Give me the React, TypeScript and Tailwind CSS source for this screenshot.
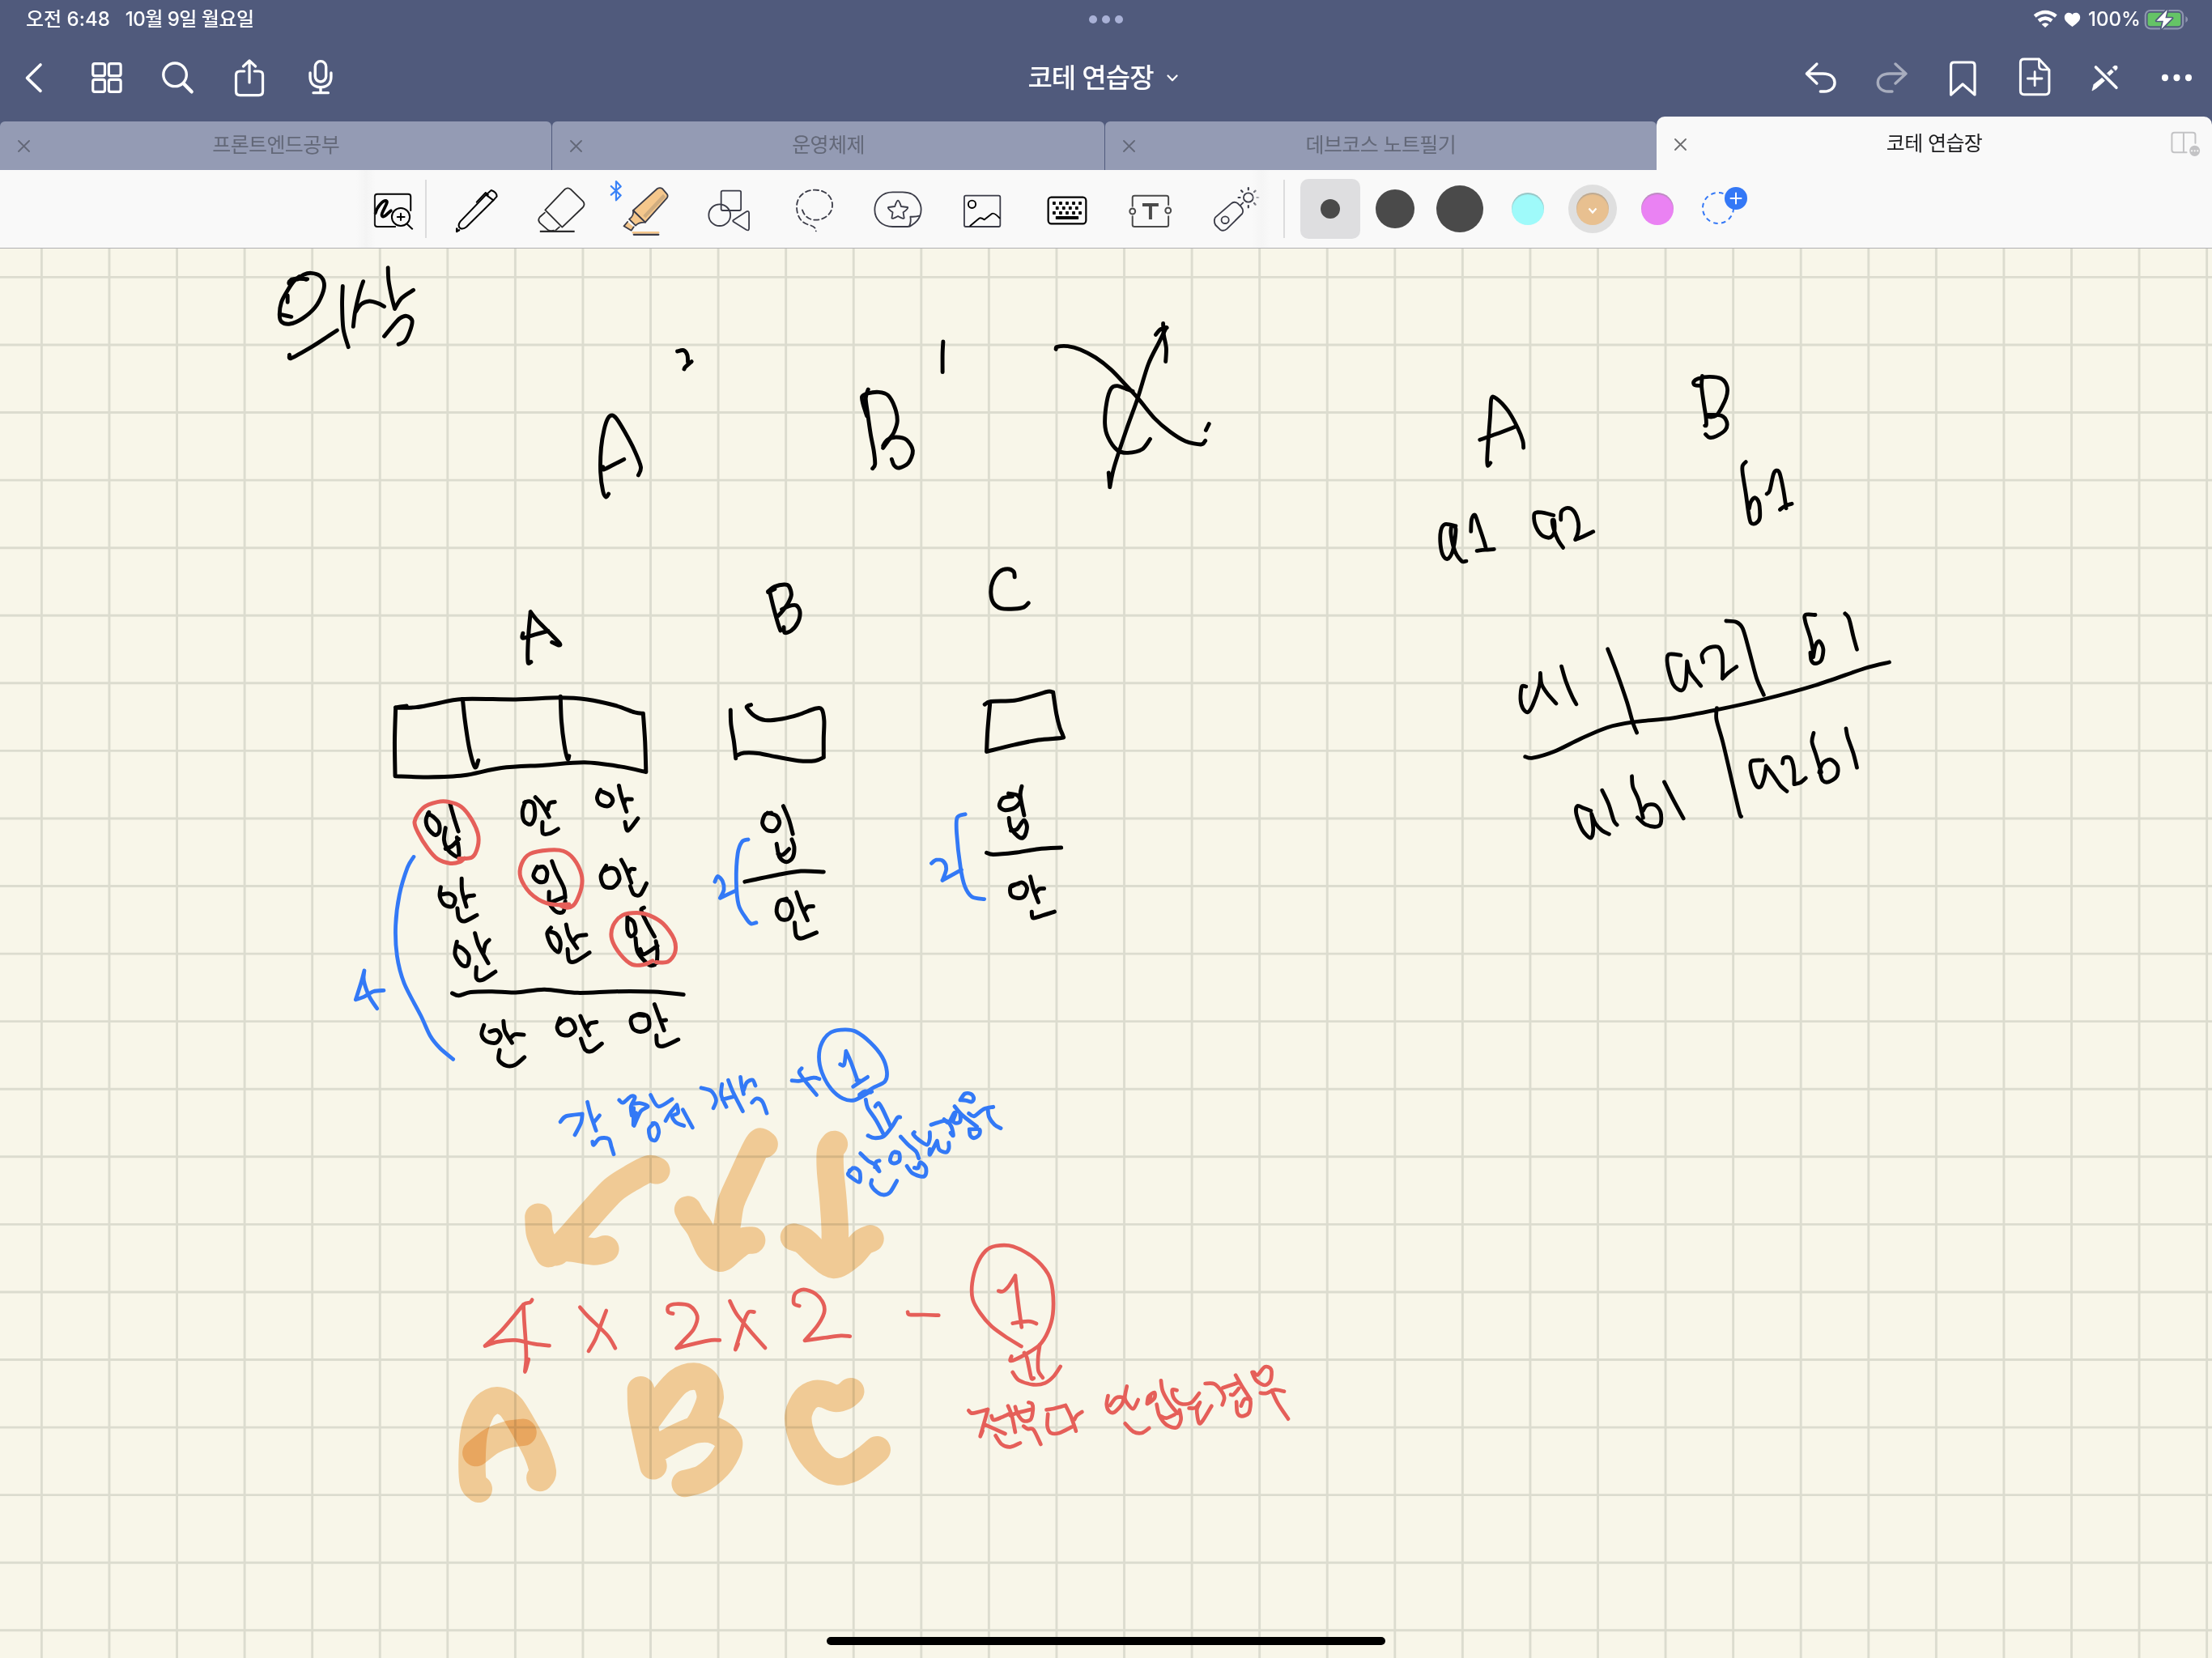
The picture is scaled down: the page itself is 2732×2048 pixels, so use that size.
import React from "react";

type Box = [number, number, number, number];
type Space = { x: number; y: number; kx: number; ky: number };

/* Coordinate spaces the drawings were sampled in. */
const LEFT: Space = { x: 0, y: 0, kx: 700 / 1568, ky: 1 / 3 };
const RIGHT: Space = { x: 2100, y: 0, kx: 632 / 1568, ky: 1 / 3 };
const TOOLS_A: Space = { x: 420, y: 200, kx: 600 / 1568, ky: 1 / 3 };
const TOOLS_B: Space = { x: 1000, y: 200, kx: 600 / 1568, ky: 1 / 3 };
const TITLE: Space = { x: 320, y: 310, kx: 1200 / 1568, ky: 1 / 3 };
const CASES: Space = { x: 420, y: 680, kx: 920 / 1568, ky: 660 / 1568 };
const TABLE: Space = { x: 1740, y: 440, kx: 640 / 1568, ky: 620 / 1568 };
const FORMULA: Space = { x: 520, y: 1260, kx: 760 / 1568, ky: 620 / 1568 };
const REMARK: Space = { x: 1060, y: 1290, kx: 1 / 3, ky: 1 / 3 };
const NOTE: Space = { x: 1080, y: 1480, kx: 560 / 1568, ky: 1 / 3 };

const toTransform = (s: Space) => `translate(${s.x} ${s.y}) scale(${s.kx} ${s.ky})`;

function Glyph({ box, space, children, className = "" }: { box: Box; space: Space; children: React.ReactNode; className?: string }) {
  return (
    <svg
      width={box[2]}
      height={box[3]}
      viewBox={box.join(" ")}
      className={"shrink-0 [&_*]:[vector-effect:non-scaling-stroke] " + className}
      fill="none"
      stroke="currentColor"
      strokeLinecap="round"
      strokeLinejoin="round"
    >
      <g transform={toTransform(space)}>{children}</g>
    </svg>
  );
}

/* Smooths sampled pen points into a cubic path; "|" separates strokes. */
function smooth(data: string): string {
  return data
    .split("|")
    .map((stroke) => {
      const p = stroke.trim().split(/\s+/).map((v) => v.split(",").map(Number));
      let d = `M${p[0][0]} ${p[0][1]}`;
      for (let i = 0; i < p.length - 1; i++) {
        const a = p[i - 1] ?? p[i];
        const b = p[i];
        const c = p[i + 1];
        const e = p[i + 2] ?? c;
        const f = 6.5;
        d += `C${b[0] + (c[0] - a[0]) / f} ${b[1] + (c[1] - a[1]) / f} ${c[0] - (e[0] - b[0]) / f} ${c[1] - (e[1] - b[1]) / f} ${c[0]} ${c[1]}`;
      }
      return d;
    })
    .join("");
}

function Ink({ space, color, width, strokes, className }: { space: Space; color: string; width: number; strokes: string[]; className?: string }) {
  return (
    <g transform={toTransform(space)} stroke={color} strokeWidth={width} className={className}>
      {strokes.map((s, i) => (
        <path key={i} d={smooth(s)} />
      ))}
    </g>
  );
}

const BLACK = "#030303";
const RED = "#e55f59";
const BLUE = "#3379f6";

const titleInk = [
  "50,125 52,106 62,103 78,104",
  "62,105 72,88 84,82 98,92 105,120 102,160 90,210 70,250 50,270 36,262 33,235 36,190 45,150 55,115 65,95",
  "50,125 48,118 52,108 66,100 76,106 | 46,165 46,190 | 36,236 52,244",
  "135,130 134,200 136,290 144,356",
  "126,294 110,318 85,355 52,397 49,385",
  "168,113 162,155 155,225 152,280 | 156,225 165,197 178,186 192,194 202,206",
  "208,62 209,110 214,170 219,214 | 219,214 230,175 249,145",
  "202,316 215,280 227,250 238,241 247,258 243,300 235,335 225,346",
  "675,372 685,368 691,385 692,412 | 698,410 688,430 686,438",
  "1104,336 1103,380 1103,449",
  "564,900 560,912 555,890 551,820 552,730 557,660 563,620 570,609 577,622 590,670 605,735 616,800 612,831",
  "555,800 556,810 572,792 589,772",
  "983,513 979,545 982,600 987,680 992,740 994,790 990,806",
  "981,612 975,570 973,540 982,528 1000,523 1015,535 1026,580 1030,630 1025,670 1018,695 1007,730",
  "1007,722 1014,700 1028,690 1045,700 1055,740 1048,785 1033,804 1025,795 1021,772",
  "1371,822 1373,875 | 1373,875 1380,800 1400,660 1418,545 1435,420 1452,340 1464,284",
  "1447,310 1455,290 1465,284 | 1459,268 1460,310 1464,360 1463,410",
  "1286,364 1288,355 1305,353 1325,365 1350,395 1375,440 1400,500 1420,550 1445,620 1470,670 1495,705 1520,717 1527,703",
  "1533,641 1528,664",
  "1410,520 1400,512 1385,500 1375,510 1368,560 1365,640 1370,690 1385,738 1402,748 1425,735 1438,697",
];

const caseBlack = [
  "402,327 396,330 395,300 397,240 401,180 | 401,180 415,205 440,240 462,272 460,278 446,269 | 385,243 385,257 410,247 438,236",
  "915,113 901,122 | 901,120 915,106 935,100 945,105 950,130 943,155 930,180 922,192 | 930,173 945,163 960,161 968,180 964,210 950,235 936,241 934,225 | 904,118 912,165 922,215 927,235",
  "1420,78 1418,62 1405,54 1388,62 1374,90 1370,125 1376,155 1392,170 1420,171 1440,166 1449,154",
  "117,463 115,560 116,662 | 116,662 185,665 260,660 340,638 430,630 515,622 590,634 644,650 | 644,650 642,560 638,478 | 638,478 620,475 580,455 520,437 460,432 370,437 258,436 200,450 160,460 117,461 140,456",
  "258,436 263,500 272,580 284,636 291,616 | 464,428 466,500 472,570 479,612 482,603",
  "822,468 823,510 829,560 833,610 | 833,603 850,594 880,595 920,606 965,617 1000,617 1018,607 | 1018,607 1018,550 1019,500 1014,466 1000,464 965,482 930,494 895,498 872,485 856,460 865,453",
  "1357,452 1370,443 1420,440 1460,426 1490,414 1501,416 | 1501,416 1508,480 1515,520 1522,545 1518,550 1470,556 1420,570 1361,590 | 1361,590 1363,530 1368,450",
  "187,768 181,790 185,815 200,835 209,825 208,800 195,780 185,772 | 232,745 240,785 249,824 | 222,814 219,850 228,880 248,900 250,880 246,842 | 222,875 235,868 250,847",
  "390,738 384,765 388,795 402,803 410,780 408,745 398,736 388,740 | 411,724 425,745 440,782 | 437,760 441,742 452,738 | 426,797 427,830 442,830 459,817",
  "548,702 541,725 548,745 565,750 574,735 568,718 552,708 | 587,690 592,720 603,766 | 598,742 602,730 614,730 | 600,797 606,822 627,786",
  "212,988 210,1015 220,1040 237,1044 242,1020 230,1007 212,1010 | 256,963 257,1000 266,1045 | 263,1025 268,1015 282,1012 | 247,1050 250,1078 262,1088 288,1070",
  "415,928 407,955 418,972 432,970 436,945 428,928 414,932 | 446,912 455,945 471,990 474,1018 | 440,1002 441,1035 455,1060 470,1060 474,1030 | 445,1032 470,1018",
  "560,925 549,955 556,985 575,988 588,965 582,938 570,932 555,940 | 592,908 602,935 613,975 | 608,945 612,935 620,935 | 611,985 618,1008 632,1010 645,977",
  "246,1148 242,1185 255,1215 268,1218 271,1190 258,1168 245,1160 | 284,1123 292,1160 312,1211 | 302,1180 306,1155 314,1143 | 287,1223 287,1255 300,1260 327,1236",
  "444,1107 436,1125 445,1160 460,1178 464,1150 455,1125 440,1118 | 476,1098 482,1130 499,1167 | 490,1148 500,1132 518,1128 | 479,1170 482,1203 495,1206 525,1180",
  "605,1075 605,1115 612,1132 622,1120 618,1090 606,1078 | 640,1048 634,1056 645,1090 662,1133 | 622,1138 627,1180 650,1216 662,1216 | 665,1147 668,1175 667,1210 | 632,1170 640,1185 668,1160",
  "236,1299 250,1306 275,1296 320,1294 370,1297 430,1288 500,1298 580,1294 660,1295 723,1303",
  "303,1393 298,1420 308,1440 328,1445 338,1425 330,1408 315,1412 | 344,1381 347,1410 362,1445 | 358,1432 368,1420 387,1421 | 336,1466 334,1495 350,1512 368,1510 388,1487",
  "463,1373 457,1400 465,1420 482,1422 495,1405 488,1380 475,1376 460,1390 | 506,1366 515,1395 525,1422 | 520,1400 526,1388 540,1384 | 507,1433 516,1465 530,1469 551,1447",
  "640,1365 622,1364 612,1378 618,1405 635,1412 650,1400 648,1368 630,1360 614,1370 | 662,1332 672,1370 682,1408 | 675,1380 686,1378 | 666,1423 668,1450 682,1454 712,1435",
  "908,770 895,775 889,800 898,820 915,822 925,800 918,778 900,770 | 933,750 945,790 953,832 | 919,861 925,900 940,914 953,900 956,870 951,848 | 922,890 932,893 945,876",
  "852,972 875,965 920,952 970,941 1018,943",
  "940,1022 924,1030 919,1060 928,1082 945,1080 952,1055 945,1030 932,1025 | 961,1003 970,1040 984,1085 | 976,1060 984,1046 996,1044 | 957,1092 960,1130 972,1138 1003,1121",
  "1415,722 1395,727 1388,750 1400,762 1420,755 1432,735 1425,718 1407,713 | 1435,692 1432,720 1440,777 | 1408,785 1412,815 1430,842 1441,838 1446,810 1439,792 1425,818 1412,822",
  "1361,887 1375,892 1420,887 1470,876 1518,872",
  "1428,978 1412,985 1412,1010 1425,1020 1440,1015 1446,990 1435,974 1415,985 | 1453,957 1460,995 1470,1032 | 1464,1005 1472,993 1482,992 | 1456,1060 1458,1078 1470,1075 1504,1060",
];

const caseRed = [
  "262,903 252,914 232,918 205,905 185,875 165,830 157,795 175,755 205,738 230,738 255,752 275,785 290,830 290,868 278,900 250,904",
  "482,1042 435,1035 400,1005 380,960 382,920 400,890 440,879 470,882 492,905 508,950 508,990 495,1035 480,1048 462,1040 482,1038",
  "658,1204 640,1215 615,1215 590,1185 572,1140 575,1100 595,1070 625,1063 650,1070 680,1095 703,1140 705,1180 690,1207 665,1208",
];

const caseBlue = [
  "78,1344 62,1310 50,1262 51,1233 | 51,1233 45,1265 33,1318 | 33,1318 50,1310 70,1294 92,1291",
  "155,899 142,930 125,1010 117,1100 120,1190 135,1270 170,1365 190,1425 210,1460 238,1493",
  "789,972 795,956 805,970 808,995 800,1020 | 800,1020 833,998 | 859,848 846,855 837,890 834,970 839,1040 855,1080 865,1095 876,1092",
  "1245,918 1255,908 1270,912 1276,935 1268,968 | 1268,968 1308,937 | 1316,774 1299,784 1298,830 1306,930 1315,985 1330,1016 1356,1023",
];

const tableInk = [
  "247,333 239,342 237,325 240,270 246,190 250,132 265,132 300,170 330,225 345,265 347,286 | 215,261 265,243 325,219",
  "888,62 886,95 893,150 899,190 900,215 896,217 | 884,92 865,90 862,80 875,70 910,64 945,70 963,95 960,130 935,180 915,190 903,187 | 905,183 945,185 962,205 958,230 930,250 910,254 898,244",
  "1020,330 1010,342 1010,365 1020,430 1028,490 1035,520 1050,522 1062,505 1060,460 1048,442 1035,455 1030,475 | 1083,430 1092,420 1103,370 1112,357 1122,365 1133,415 1142,475 | 1123,479 1140,467 1159,461",
  "142,530 110,525 97,545 96,590 105,625 120,632 135,600 142,540 130,530 128,560 140,610 160,640 174,640 | 188,547 190,510 200,496 212,530 228,580 234,603 | 206,608 230,605 258,603",
  "438,497 400,488 380,492 382,525 400,557 425,567 440,550 440,515 434,515 440,545 452,575 467,598 | 460,511 462,485 480,474 500,485 513,520 512,550 504,573 | 504,573 530,562 558,548",
  "355,1032 342,1032 338,1070 345,1100 360,1112 375,1090 395,1030 398,990 | 398,990 402,1025 420,1055 446,1085 | 462,969 475,1015 495,1065 507,1087 | 602,915 630,990 660,1080 678,1145 690,1176",
  "823,934 786,932 783,965 800,1025 825,1044 838,1020 842,953 | 842,953 850,985 868,1010 884,1030 | 891,956 887,932 905,912 935,908 948,930 950,970 949,1007 | 949,1007 968,988 992,970 | 960,827 990,830 1010,850 1030,920 1052,1005 1074,1058",
  "1230,808 1200,808 1200,830 1215,880 1225,930 | 1215,926 1218,950 1230,960 1248,950 1254,915 1242,890 1230,905 1224,940 | 1320,804 1332,820 1345,875 1356,916",
  "352,1251 375,1255 440,1235 520,1195 600,1160 680,1143 800,1130 930,1105 1070,1073 1230,1028 1380,975 1454,956 | 932,1099 931,1135 950,1205 975,1315 1000,1425 1006,1438",
  "551,1420 530,1412 510,1405 507,1430 525,1480 550,1505 558,1480 553,1430 | 553,1430 565,1460 585,1482 606,1493 | 585,1356 605,1400 620,1450 630,1464 | 675,1312 678,1345 695,1385 709,1442 | 709,1420 720,1403 745,1402 762,1425 762,1460 745,1470 715,1462 692,1441 | 773,1330 800,1385 831,1444",
  "1071,1262 1036,1266 1036,1300 1050,1340 1065,1345 1076,1315 1081,1280 | 1081,1280 1100,1305 1125,1342 1144,1359 | 1131,1272 1135,1255 1155,1256 1165,1290 1166,1337 | 1166,1337 1185,1332 1201,1318 | 1225,1177 1220,1205 1232,1245 1248,1300 | 1242,1300 1252,1272 1275,1260 1297,1280 1295,1312 1270,1330 1252,1325 1244,1300 | 1323,1163 1328,1190 1345,1240 1356,1285",
];

const formulaBlue = [
  "1122,237 1150,213 1182,192 1187,160 1175,115 1145,70 1108,36 1080,30 1045,38 1022,70 1014,115 1022,165 1045,215 1075,245 1105,250 1146,222 | 1122,234 1144,222",
  "1068,138 1078,140 1083,97 | 1083,97 1095,130 1112,188 | 1101,208 1138,178 | 1110,188 1120,190",
  "945,189 965,190 1000,180 1015,184 | 970,151 964,165 985,200 1008,234",
  "355,318 370,300 411,293 | 411,293 408,320 392,359 | 424,256 432,295 446,345 | 440,320 455,298 | 437,380 440,390 455,370 478,371 485,395 491,419",
  "505,250 515,258 535,238 545,242 535,270 537,298 | 537,262 560,260 578,270 560,285 543,330 | 542,275 541,328 | 548,290 545,325 | 595,322 581,340 585,370 598,375 606,350 600,325 590,322",
  "585,234 605,270 640,247 | 623,315 635,290 652,265 | 652,265 655,290 640,300 650,320 670,330 | 667,280 692,336",
  "714,212 740,222 752,250 745,275 | 767,200 765,235 778,271 | 783,188 795,225 820,285 | 768,248 800,238",
  "814,178 817,205 822,231 | 822,220 830,195 845,187 852,205 | 843,258 855,245 870,255 881,291",
  "1100,462 1088,480 1095,490 1117,506 1118,475 1105,462 1092,470",
];

const remarkBlue = [
  "5,192 25,182 50,175 | 5,186 25,174 46,178",
  "28,205 35,235 65,280 92,330 | 63,230 75,218 90,240 120,305 | 36,338 60,347 95,340 125,305 145,272 155,270",
  "8,404 35,430 65,448 78,470 70,462 | 62,455 66,436 78,431 | 50,503 48,522 70,548 95,558 118,548 143,506",
  "150,402 128,402 118,430 132,441 152,432 152,405 135,398 | 157,342 185,372 215,398 224,422",
  "180,451 200,477 235,490 250,482 250,455 230,437 222,458 208,457",
  "208,326 204,334 225,355 255,372 265,350 265,326 | 265,388 266,408 292,358 | 292,358 300,390 325,400 336,385 335,364",
  "270,298 295,290 325,283 345,305 352,338 342,328 | 318,278 335,290 355,255 360,258 352,280 | 357,230 385,262 440,305 | 378,258 378,285 362,292 350,285 | 412,315 415,338 430,347 448,335 448,315 412,315",
  "378,206 395,183 418,184 428,200 420,213 400,208 378,206 | 410,256 430,266 465,240 500,232 | 480,240 485,270 505,298 528,311",
];

const formulaRed = [
  "283,874 278,882 262,888 240,920 205,970 163,1018 | 163,1018 195,1005 240,1000 290,1012 327,1017 | 261,888 263,940 267,1010 268,1060 265,1099 274,1060",
  "405,897 425,925 475,985 495,1025 | 472,908 462,940 445,995 427,1034",
  "642,917 630,912 630,895 650,887 685,893 704,925 695,965 670,1000 651,1025 | 651,1025 700,1010 740,1000 761,1000",
  "787,878 805,920 845,980 877,1024 | 849,912 835,912 825,935 812,985 801,1029 808,1012",
  "964,893 950,885 953,855 975,842 1005,855 1025,885 1027,915 1010,955 978,1001 | 978,1001 1030,992 1070,986 1093,988",
];

const highlighter = [
  "600,470 580,465 540,490 490,530 440,595 390,665 345,725 | 299,615 302,665 315,705 325,730 | 325,730 370,712 440,723 470,715",
  "875,388 862,382 845,420 815,500 790,570 780,640 765,740 | 680,592 690,615 710,650 735,715 762,744 790,720 820,692 843,688",
  "1053,388 1043,410 1043,470 1050,560 1055,660 1053,760 | 950,678 975,690 1010,730 1052,765 1095,735 1125,695 1145,683",
  "147,1465 133,1445 130,1380 135,1290 155,1220 180,1192 205,1190 230,1210 265,1280 295,1350 310,1410 303,1430",
  "140,1352 180,1315 220,1295 260,1288",
  "560,1155 562,1220 575,1300 592,1393 | 582,1240 615,1185 655,1130 695,1113 725,1130 737,1180 720,1240 700,1280 | 592,1345 650,1305 700,1280 750,1283 785,1320 765,1380 720,1430 673,1448",
  "1095,1160 1080,1175 1055,1182 1030,1170 1005,1167 980,1185 962,1230 965,1280 985,1340 1020,1390 1060,1411 1100,1400 1140,1365 1162,1342",
];

const noteInk = [
  "115,422 122,432 170,432 222,434",
  "508,549 460,518 405,475 365,425 340,375 338,315 355,245 385,195 420,177 480,179 550,220 600,280 616,340 617,430 600,495 570,545 520,580 472,603 474,586",
  "429,344 445,345 465,325 487,287 | 487,287 492,340 500,410 509,478 | 478,464 510,458 540,457 560,465",
  "518,573 527,590 535,630 543,668 551,667 | 572,543 566,590 567,640 582,665 | 478,645 500,675 550,691 590,685 620,660 643,624",
  "326,787 340,797 392,783 | 392,783 380,830 366,882 374,862 | 380,838 452,873 | 405,807 412,822 440,812 470,797 | 462,770 475,805 487,867 | 419,880 440,912 470,922 504,907",
  "487,773 495,800 515,825 540,820 548,785 545,762 533,757 | 470,805 490,797 545,782 | 516,845 530,855 550,858 575,912",
  "595,784 620,780 661,768 | 600,800 598,845 610,870 640,870 682,848 | 661,768 680,810 697,863 | 692,820 700,805 718,792",
  "808,732 803,765 812,790 830,793 855,765 860,740 835,740 815,768 | 873,697 866,740 878,765 896,780 912,747 | 867,835 895,865 925,870 950,852",
  "943,762 948,735 968,720 968,742 943,762 955,735 | 991,676 997,715 1020,760 1048,797 | 976,764 985,805 1010,840 1045,850 1060,820 1055,785 | 990,808 1010,815 1038,802",
  "1046,712 1030,710 1035,740 1060,762 1095,758 1123,723 | 1088,778 1110,777 1126,757 1115,785 1122,832 1135,825 1166,770",
  "1144,687 1175,688 1200,715 1210,740 1203,766 | 1205,703 1255,685 | 1249,656 1270,695 1300,745 | 1232,728 1242,728 1260,705 | 1252,755 1255,795 1270,808 1295,795 1300,750 1280,745 1268,770",
  "1306,645 1320,675 1350,693 1370,675 1372,635 1350,625 1325,655 1312,645 | 1335,722 1355,723 1385,710 1417,716 | 1374,712 1395,760 1431,818",
];

const GRID = 83.57;

function Page() {
  return (
    <main className="relative h-[1741px] overflow-hidden bg-[#f8f6e9]">
      <svg
        width="2732"
        height="1741"
        viewBox="0 307 2732 1741"
        className="block [&_path]:[vector-effect:non-scaling-stroke]"
        fill="none"
        strokeLinecap="round"
        strokeLinejoin="round"
      >
        <g stroke="#dcdccf" strokeWidth="2.9">
          {Array.from({ length: 33 }, (_, i) => (
            <line key={i} x1={51.4 + i * GRID} x2={51.4 + i * GRID} y1="307" y2="2048" />
          ))}
          {Array.from({ length: 21 }, (_, i) => (
            <line key={i} x1="0" x2="2732" y1={342.4 + i * GRID} y2={342.4 + i * GRID} />
          ))}
        </g>
        <Ink space={TITLE} color={BLACK} width={4.9} strokes={titleInk} />
        <Ink space={CASES} color={BLACK} width={5} strokes={caseBlack} />
        <Ink space={CASES} color={RED} width={5} strokes={caseRed} />
        <Ink space={CASES} color={BLUE} width={4.8} strokes={caseBlue} />
        <Ink space={TABLE} color={BLACK} width={4.8} strokes={tableInk} />
        <Ink space={FORMULA} color={BLUE} width={4.8} strokes={formulaBlue} />
        <Ink space={REMARK} color={BLUE} width={4.9} strokes={remarkBlue} />
        <Ink space={FORMULA} color={RED} width={4.7} strokes={formulaRed} />
        <Ink space={NOTE} color={RED} width={4.7} strokes={noteInk} />
        <Ink space={FORMULA} color="#f7d2a3" width={33.5} strokes={highlighter} className="[&_path]:mix-blend-multiply" />
      </svg>
      <div className="absolute bottom-[16px] left-1/2 h-[10px] w-[690px] -translate-x-1/2 rounded-full bg-black" />
    </main>
  );
}

function StatusBar() {
  return (
    <div className="grid h-[48px] grid-cols-[1fr_auto_1fr] items-center text-[24px] leading-none font-medium">
      <div className="flex gap-[19px] pl-[32px] whitespace-pre">
        <span>오전 6:48</span>
        <span className="tracking-[-0.5px]">10월 9일 월요일</span>
      </div>
      <div className="flex gap-[6px]">
        <i className="size-[10px] rounded-full bg-[#a9b1d6]" />
        <i className="size-[10px] rounded-full bg-[#a9b1d6]" />
        <i className="size-[10px] rounded-full bg-[#a9b1d6]" />
      </div>
      <div className="flex items-center justify-end">
        <Glyph box={[2508, 0, 64, 48]} space={RIGHT}>
          <g strokeLinecap="butt" strokeWidth="4.6">
            <path d="M1025 60Q1057 30 1090 60" />
            <path d="M1037 77Q1057 58 1077 77" />
          </g>
          <path d="M1046 90Q1057 80 1068 90L1057 102Z" fill="currentColor" stroke="none" />
          <path d="M1140 99C1120 82 1116 74 1116 64C1116 46 1134 42 1140 54C1146 42 1164 46 1164 64C1164 74 1160 82 1140 99Z" fill="currentColor" stroke="none" />
        </Glyph>
        <span className="w-[73px] pl-[7px]">100%</span>
        <Glyph box={[2645, 0, 87, 48]} space={RIGHT}>
          <rect x="1364" y="39" width="115" height="67" rx="15" ry="18" stroke="#8e95b0" strokeWidth="2.2" />
          <rect x="1371" y="47" width="101" height="50" rx="8" ry="9" fill="#65c466" stroke="none" />
          <path d="M1487 60Q1494 64 1494 72Q1494 80 1487 84Z" fill="#8e95b0" stroke="none" />
          <path d="M1431 36L1398 77H1419L1413 107L1446 67H1425Z" fill="#fff" stroke="#505a7c" strokeWidth="3.4" className="[paint-order:stroke]" />
        </Glyph>
      </div>
    </div>
  );
}

function NavBar() {
  return (
    <div className="grid h-[96px] grid-cols-[1fr_auto_1fr] items-center">
      <div className="flex">
        <Glyph box={[0, 48, 86, 96]} space={LEFT}>
          <path d="M112 240L75 289L112 337" strokeWidth="3.6" />
        </Glyph>
        <Glyph box={[86, 48, 90, 96]} space={LEFT}>
          <g strokeWidth="3.2">
            <rect x="257" y="236" width="33" height="45" rx="5" ry="7" />
            <rect x="301" y="236" width="33" height="45" rx="5" ry="7" />
            <rect x="257" y="295" width="33" height="45" rx="5" ry="7" />
            <rect x="301" y="295" width="33" height="45" rx="5" ry="7" />
          </g>
        </Glyph>
        <Glyph box={[176, 48, 88, 96]} space={LEFT}>
          <ellipse cx="484" cy="277" rx="32" ry="43" strokeWidth="3.4" />
          <path d="M509 311L530 340" strokeWidth="4.4" />
        </Glyph>
        <Glyph box={[264, 48, 88, 96]} space={LEFT}>
          <g strokeWidth="3.2">
            <path d="M676 264H664Q653 264 653 278V339Q653 353 664 353H716Q727 353 727 339V278Q727 264 716 264H704" />
            <path d="M690 306V228M673 246L690 225L707 246" />
          </g>
        </Glyph>
        <Glyph box={[352, 48, 88, 96]} space={LEFT}>
          <g strokeWidth="3.4">
            <rect x="872" y="227" width="30" height="76" rx="15" ry="20" />
            <path d="M858 270V285C858 310 870 323 887 323C904 323 916 310 916 285V270M887 323V342M867 344H908" />
          </g>
        </Glyph>
      </div>
      <div className="flex items-center gap-[16px] pr-[8px]">
        <h1 className="text-[33px] leading-none font-medium tracking-[-0.9px]">코테 연습장</h1>
        <svg width="14" height="9" viewBox="0 0 14 9" fill="none" stroke="currentColor" strokeWidth="2.2" strokeLinecap="round" strokeLinejoin="round">
          <path d="M1.5 1.5L7 7.3L12.5 1.5" />
        </svg>
      </div>
      <div className="flex justify-end">
        <Glyph box={[2206, 48, 87, 96]} space={RIGHT}>
          <path d="M357 237L326 273L357 309M326 273H376C400 273 412 288 412 306S400 339 380 339H368" strokeWidth="3.4" />
        </Glyph>
        <Glyph box={[2293, 48, 88, 96]} space={RIGHT} className="opacity-50">
          <path d="M598 237L630 273L598 309M630 273H580C556 273 544 288 544 306S556 339 576 339H588" strokeWidth="3.4" />
        </Glyph>
        <Glyph box={[2381, 48, 88, 96]} space={RIGHT}>
          <path d="M768 351V242Q768 231 777 231H832Q841 231 841 242V351L804 312Z" strokeWidth="3.2" />
        </Glyph>
        <Glyph box={[2469, 48, 88, 96]} space={RIGHT}>
          <g strokeWidth="3">
            <path d="M1038 219H992Q981 219 981 232V337Q981 350 992 350H1058Q1069 350 1069 337V259L1038 219" />
            <path d="M1038 221V244Q1038 258 1049 258H1067" strokeWidth="2.6" />
            <path d="M1025 266V317M1003 291H1047" strokeWidth="2.8" />
          </g>
        </Glyph>
        <Glyph box={[2557, 48, 88, 96]} space={RIGHT}>
          <path d="M1212 249L1275 325" strokeWidth="3.6" />
          <path d="M1201 335L1206 313L1231 289L1239 299L1214 326Z" fill="currentColor" strokeWidth="0.8" />
          <path d="M1247 271L1259 258L1266 266L1254 280Z" fill="currentColor" strokeWidth="0.8" />
          <path d="M1264 249Q1270 240 1277 245Q1281 252 1273 261Z" fill="currentColor" strokeWidth="0.8" />
        </Glyph>
        <Glyph box={[2645, 48, 87, 96]} space={RIGHT}>
          <g fill="currentColor" stroke="none">
            <ellipse cx="1424" cy="288" rx="10" ry="12.5" />
            <ellipse cx="1460" cy="288" rx="10" ry="12.5" />
            <ellipse cx="1496" cy="288" rx="10" ry="12.5" />
          </g>
        </Glyph>
      </div>
    </div>
  );
}

function CloseIcon({ className }: { className: string }) {
  return (
    <svg width="15" height="15" viewBox="0 0 15 15" fill="none" stroke="currentColor" strokeWidth="1.8" strokeLinecap="round" className={className}>
      <path d="M1 1L14 14M14 1L1 14" />
    </svg>
  );
}

function Tab({ label }: { label: string }) {
  return (
    <div className="grid h-[60px] flex-1 grid-cols-[60px_1fr_60px] items-center rounded-t-[6px] bg-[#949bb4] text-[#636878]">
      <CloseIcon className="ml-[22px]" />
      <span className="-mt-px text-center text-[25px] leading-none tracking-[-0.6px]">{label}</span>
    </div>
  );
}

function TabBar() {
  return (
    <div className="flex h-[66px] items-end">
      <div className="flex w-[2046px] gap-px">
        <Tab label="프론트엔드공부" />
        <Tab label="운영체제" />
        <Tab label="데브코스 노트필기" />
      </div>
      <div className="grid h-[66px] flex-1 grid-cols-[60px_1fr_60px] items-center rounded-t-[10px] bg-[#f9f9f9] text-[#1c1c1e]">
        <CloseIcon className="mt-[3px] ml-[22px] text-[#6e6e70]" />
        <span className="text-center text-[25px] leading-none tracking-[-0.6px]">코테 연습장</span>
        <Glyph box={[2672, 144, 60, 66]} space={RIGHT} className="text-[#c3c3c5]">
          <path d="M1517 530V500Q1517 491 1509 491H1453Q1445 491 1445 500V556Q1445 565 1453 565H1490M1481 491V565" strokeWidth="2" />
          <ellipse cx="1515" cy="559" rx="16" ry="20" fill="currentColor" stroke="none" />
          <g fill="#f9f9f9" stroke="none">
            <ellipse cx="1506" cy="559" rx="2.8" ry="3.4" />
            <ellipse cx="1515" cy="559" rx="2.8" ry="3.4" />
            <ellipse cx="1524" cy="559" rx="2.8" ry="3.4" />
          </g>
        </Glyph>
      </div>
    </div>
  );
}

const SLATE = "text-[#3a3b47]";

function Tools() {
  const row1 = [789, 810, 831, 852, 873];
  const row2 = [799, 820, 841, 862];
  return (
    <>
      <Glyph box={[440, 210, 85, 96]} space={TOOLS_A} className="text-black">
        <g strokeWidth="2">
          <path d="M228 180V128Q228 119 220 119H120Q112 119 112 128V231Q112 240 120 240H178" />
          <ellipse cx="196" cy="204" rx="29" ry="33" />
          <path d="M196 191V216M185 204H208M217 231L233 248" />
        </g>
        <path d="M114 190C118 168 138 142 149 144C160 148 128 192 136 201C144 208 156 186 164 181" strokeWidth="3.8" />
      </Glyph>
      <div className="h-[72px] w-[2px] shrink-0 bg-[#dcdcdd]" />
      <Glyph box={[527, 210, 117, 96]} space={TOOLS_A} className="text-black">
        <g strokeWidth="2">
          <path d="M471 122L388 221Q378 237 388 246Q398 251 408 241L495 142" />
          <path d="M471 122L488 105Q506 112 506 128L495 142Z" />
          <path d="M441 149L470 114L478 122" />
          <path d="M377 258V248M377 257L384 253" strokeWidth="2.6" />
        </g>
      </Glyph>
      <Glyph box={[644, 210, 96, 96]} space={TOOLS_A} className="text-[#2c2c2e]">
        <g strokeWidth="1.8">
          <path d="M662 178L726 101Q735 93 744 101L784 146Q792 157 784 168L717 242Z" />
          <path d="M661 188L645 204Q637 214 645 226L672 253Q680 257 690 254M708 241L696 253" />
        </g>
        <path d="M645 257.5H757" strokeWidth="2.2" strokeLinecap="butt" />
      </Glyph>
      <Glyph box={[740, 210, 110, 96]} space={TOOLS_A} className={SLATE}>
        <path d="M875 90L906 124L891 142V72L906 91L875 122" stroke="#3a82f7" strokeWidth="2.2" />
        <path d="M946 180L1024 99Q1033 93 1041 100L1055 119Q1060 126 1055 134L985 224Z" fill="#f5c78c" strokeWidth="1.8" />
        <path d="M1043 119L1051 130L986 208L978 199Z" fill="#d0ad80" stroke="none" />
        <path d="M946 180Q949 201 933 212L954 236Q964 223 985 224Z" fill="#f5c78c" strokeWidth="1.8" />
        <path d="M928 222L916 238L940 254L948 241" fill="#f5c78c" strokeWidth="1.8" />
        <path d="M946 262H1027" stroke="#f5c78c" strokeWidth="2.8" />
        <path d="M948 269.5H1028" strokeWidth="2.2" />
      </Glyph>
      <Glyph box={[850, 210, 104, 96]} space={TOOLS_A} className={SLATE}>
        <g strokeWidth="1.8">
          <rect x="1230" y="107" width="64" height="73" rx="5" ry="5" />
          <ellipse cx="1225" cy="197" rx="35" ry="40" />
          <path d="M1270 215L1312 184Q1320 180 1320 190V246Q1320 256 1312 252L1270 222Q1266 218 1270 215Z" />
        </g>
      </Glyph>
      <Glyph box={[954, 210, 104, 96]} space={TOOLS_A} className={SLATE}>
        <path
          d="M1492 178C1500 204 1515 215 1535 215C1566 215 1589 190 1589 160C1589 128 1566 104 1533 104C1498 104 1474 130 1474 165C1474 200 1486 222 1510 232Q1537 240 1536 256"
          strokeWidth="1.8"
          strokeDasharray="6 4"
        />
      </Glyph>
      <Glyph box={[1058, 210, 104, 96]} space={TOOLS_B} className={SLATE}>
        <g strokeWidth="1.8">
          <path d="M356 200C362 180 360 160 352 145Q338 112 300 112H268C234 112 210 140 210 177S234 240 268 240H316Q324 240 330 234Q350 220 356 200Z" />
          <path d="M325 203Q344 204 354 200M325 203Q328 222 322 237" />
          <path d="M285 143Q290 145 295 165L316 168Q320 172 302 187L305 208Q303 213 285 201Q267 213 265 208L268 187Q250 172 254 168L275 165Q280 145 285 143Z" />
        </g>
      </Glyph>
      <Glyph box={[1162, 210, 104, 96]} space={TOOLS_B} className={SLATE}>
        <rect x="499" y="125" width="116" height="115" rx="5" ry="6" strokeWidth="1.8" />
        <g stroke="#000" strokeWidth="1.9">
          <ellipse cx="524" cy="157" rx="12" ry="14" />
          <path d="M518 237L547 209Q552 205 564 214L588 192Q595 186 613 208" />
        </g>
      </Glyph>
      <Glyph box={[1266, 210, 104, 96]} space={TOOLS_B} className="text-black">
        <rect x="770" y="131" width="122" height="98" rx="10" ry="12" strokeWidth="2.2" />
        <g fill="currentColor" stroke="none">
          {row1.map((x) => (
            <React.Fragment key={x}>
              <rect x={x - 5} y="147" width="10" height="12" rx="2" />
              <rect x={x - 5} y="183" width="10" height="12" rx="2" />
            </React.Fragment>
          ))}
          {row2.map((x) => (
            <rect key={x} x={x - 5} y="165" width="10" height="12" rx="2" />
          ))}
          <rect x="794" y="201" width="74" height="12" rx="2" />
        </g>
      </Glyph>
      <Glyph box={[1370, 210, 104, 96]} space={TOOLS_B} className="text-[#4a4a4a]">
        <g strokeWidth="2">
          <path d="M1042 164V132Q1042 125 1049 125H1151Q1158 125 1158 132V159M1158 202V234Q1158 240 1151 240H1049Q1042 240 1042 234V202" />
          <ellipse cx="1042" cy="183" rx="9" ry="10.5" />
          <ellipse cx="1157" cy="180" rx="9" ry="10.5" />
        </g>
        <path d="M1074 159H1126M1100 159V213" strokeWidth="4" strokeLinecap="butt" />
      </Glyph>
      <Glyph box={[1474, 210, 111, 96]} space={TOOLS_B} className={SLATE}>
        <g strokeWidth="1.8">
          <path d="M1309 206L1360 155Q1370 144 1382 154L1393 167Q1402 180 1396 192L1347 248Q1336 259 1325 251L1310 234Q1303 220 1309 206Z" />
          <ellipse cx="1341" cy="215" rx="12" ry="13" />
          <path d="M1391 160L1399 151" />
          <ellipse cx="1416" cy="132" rx="15.5" ry="17" />
          <path d="M1416 96V103M1416 162V169M1384 132H1389M1444 132H1449M1393 106L1397 111M1439 107L1435 111M1439 158L1435 153" strokeWidth="2.2" />
        </g>
      </Glyph>
    </>
  );
}

function Swatch({ className }: { className: string }) {
  return <i className={"size-[40px] rounded-full shadow-[inset_0_2px_1px_rgba(150,150,150,0.55)] " + className} />;
}

function ToolBar() {
  return (
    <div className="relative flex h-[97px] items-center border-b border-[#b0b0b3] bg-[#f9f9f9] pl-[440px]">
      <div className="absolute top-0 left-[440px] h-full w-[24px] bg-linear-to-r from-transparent via-[#f4f4f4] to-transparent" />
      <div className="absolute top-0 left-[1546px] h-full w-[24px] bg-linear-to-r from-transparent via-[#f5f5f5] to-transparent" />
      <Tools />
      <div className="h-[72px] w-[2px] shrink-0 bg-[#dcdcdd]" />
      <div className="ml-[16px] flex items-center">
        <div className="flex w-[80px] justify-center">
          <div className="flex size-[74px] items-center justify-center rounded-[10px] bg-[#dedee0]">
            <i className="size-[24px] rounded-full bg-[#4a4a4a]" />
          </div>
        </div>
        <div className="flex w-[80px] justify-center">
          <i className="size-[48px] rounded-full bg-[#4a4a4a]" />
        </div>
        <div className="flex w-[80px] justify-center">
          <i className="size-[58px] rounded-full bg-[#4a4a4a]" />
        </div>
        <div className="ml-[4px] flex w-[80px] justify-center">
          <Swatch className="bg-[#9ffafa]" />
        </div>
        <div className="flex w-[80px] justify-center">
          <div className="relative flex size-[60px] items-center justify-center rounded-full bg-[#dfdfdf]">
            <Swatch className="bg-[#e8c090]" />
            <svg width="12" height="9" viewBox="0 0 12 9" fill="none" stroke="#fff" strokeWidth="2.2" className="absolute top-[28px] left-[24px]">
              <path d="M1.5 1.5L6 6.5L10.5 1.5" />
            </svg>
          </div>
        </div>
        <div className="flex w-[80px] justify-center">
          <Swatch className="bg-[#ea82f3]" />
        </div>
        <div className="flex w-[80px] justify-center">
          <svg width="80" height="80" viewBox="2087 218 80 80" fill="none">
            <circle cx="2122" cy="257" r="19" stroke="#3478f6" strokeWidth="2" strokeDasharray="5.5 4.5" />
            <circle cx="2144" cy="245" r="14" fill="#3478f6" />
            <path d="M2144 238.5V251.5M2137.500 245H2150.500" stroke="#fff" strokeWidth="2" strokeLinecap="round" />
          </svg>
        </div>
      </div>
    </div>
  );
}

export default function App() {
  return (
    <div className="flex h-[2048px] w-[2732px] flex-col overflow-hidden font-['Inter','Noto_Sans_CJK_KR',sans-serif]">
      <header className="bg-[#505a7c] text-white">
        <StatusBar />
        <NavBar />
        <TabBar />
      </header>
      <ToolBar />
      <Page />
    </div>
  );
}
